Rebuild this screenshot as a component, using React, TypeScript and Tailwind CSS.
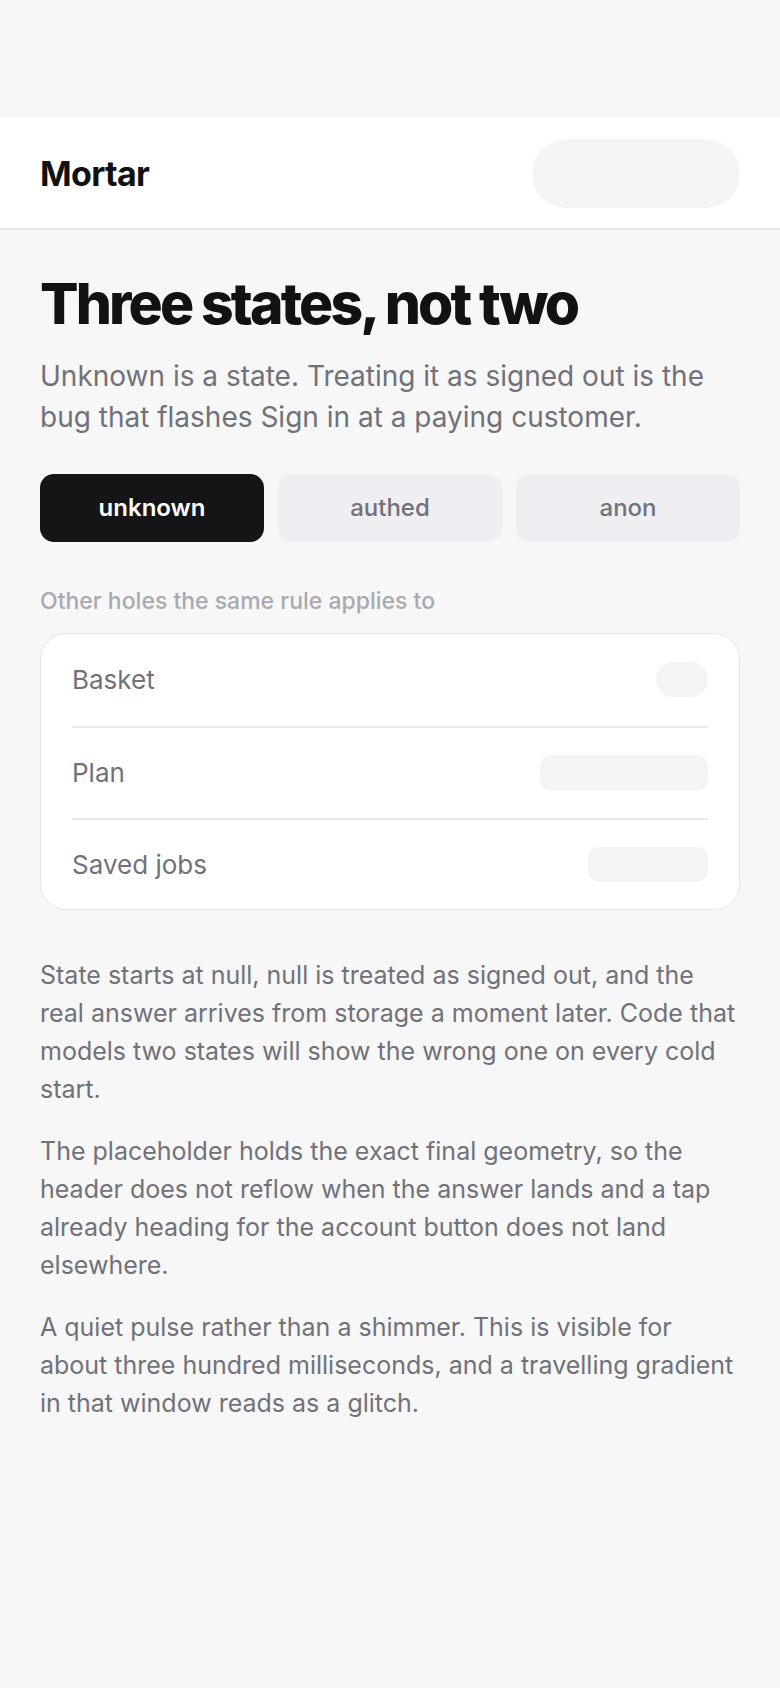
import React from "react";

const font = { fontFamily: "Inter, 'Noto Sans', sans-serif" };

export default function App() {
  return (
    <div className="min-h-[1688px] bg-[#f7f7f7]" style={font}>
      <div className="h-[118px]" />
      <header className="flex h-[112px] items-center justify-between border-b-2 border-[#e6e6e8] bg-white px-10">
        <div className="text-[34px] font-bold tracking-[-0.02em] text-[#111113]">Mortar</div>
        <div className="h-[69px] w-[208px] rounded-full bg-[#f4f4f6]" />
      </header>
      <main className="px-10 pt-[45px]">
        <h1 className="text-[57px] font-extrabold leading-none tracking-[-0.05em] text-[#121214]">
          Three states, not two
        </h1>
        <p className="mt-[24px] text-[28px] leading-[41px] text-[#71717a]">
          Unknown is a state. Treating it as signed out is the bug that flashes Sign in at a paying customer.
        </p>
        <div className="mt-[36px] grid grid-cols-3 gap-[14px]">
          <div className="flex h-[68px] items-center justify-center rounded-[14px] bg-[#151518] text-[24px] font-semibold text-white">
            unknown
          </div>
          <div className="flex h-[68px] items-center justify-center rounded-[14px] bg-[#efeff3] text-[24px] font-medium text-[#71717a]">
            authed
          </div>
          <div className="flex h-[68px] items-center justify-center rounded-[14px] bg-[#efeff3] text-[24px] font-medium text-[#71717a]">
            anon
          </div>
        </div>
        <div className="mt-[42px] text-[23px] font-medium text-[#a9a9b2]">Other holes the same rule applies to</div>
        <div className="mt-[14px] rounded-[26px] border border-[#e6e6e8] bg-white px-[31px]">
          <div className="flex h-[92px] items-center justify-between">
            <span className="text-[26px] text-[#71717a]">Basket</span>
            <div className="h-[35px] w-[52px] rounded-full bg-[#f4f4f6]" />
          </div>
          <div className="h-[2px] bg-[#e8e8ea]" />
          <div className="flex h-[90px] items-center justify-between">
            <span className="text-[26px] text-[#71717a]">Plan</span>
            <div className="h-[36px] w-[168px] rounded-[12px] bg-[#f4f4f6]" />
          </div>
          <div className="h-[2px] bg-[#e8e8ea]" />
          <div className="flex h-[89px] items-center justify-between">
            <span className="text-[26px] text-[#71717a]">Saved jobs</span>
            <div className="h-[35px] w-[120px] rounded-[12px] bg-[#f4f4f6]" />
          </div>
        </div>
        <div className="mt-[46px] flex flex-col gap-6 text-[25px] leading-[38px] text-[#71717a]">
          <p>
            State starts at null, null is treated as signed out, and the real answer arrives from storage a moment later. Code that models two states will show the wrong one on every cold start.
          </p>
          <p>
            The placeholder holds the exact final geometry, so the header does not reflow when the answer lands and a tap already heading for the account button does not land elsewhere.
          </p>
          <p>
            A quiet pulse rather than a shimmer. This is visible for about three hundred milliseconds, and a travelling gradient in that window reads as a glitch.
          </p>
        </div>
      </main>
    </div>
  );
}
